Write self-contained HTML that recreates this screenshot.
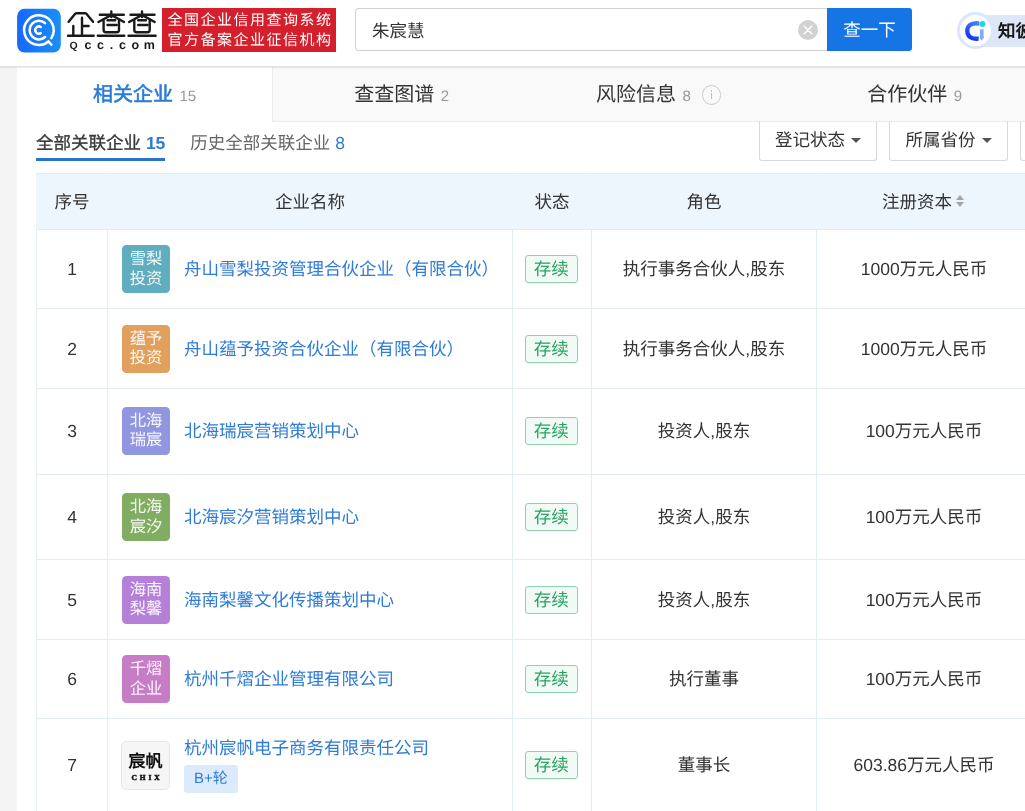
<!DOCTYPE html>
<html lang="zh-CN">
<head>
<meta charset="utf-8">
<title>朱宸慧 - 企查查</title>
<style>
*{box-sizing:border-box;margin:0;padding:0}
html,body{width:1025px;height:811px;overflow:hidden}
body{position:relative;background:#f4f4f4;text-rendering:geometricPrecision;font-family:"Liberation Sans",sans-serif;font-size:17.5px;color:#333;line-height:1}
a{color:#2f7cd6;text-decoration:none}

/* ---------- header ---------- */
.hd{will-change:transform;position:absolute;left:0;top:0;width:1025px;height:66px;background:#fff;box-shadow:0 1px 0 #e2e2e2,0 2px 1px rgba(0,0,0,.07);z-index:5}
.lg-ico{position:absolute;left:17px;top:8px;width:44px;height:45px}
.lg-word{position:absolute;left:62px;top:4px;width:100px;height:54px}
.slogan{position:absolute;left:162px;top:8px;width:174px;height:44px;background:#d4202c;color:#fff;font-size:15px;letter-spacing:1.5px;line-height:20.5px;padding:2.5px 0 0 5.5px;white-space:nowrap;overflow:hidden}
.sbox{position:absolute;left:355px;top:8px;width:473px;height:43px;border:1px solid #d2d2d2;border-right:0;border-radius:4px 0 0 4px;background:#fff}
.sbox .q{position:absolute;left:16px;top:0;line-height:44px;font-size:17.5px;color:#333}
.sbox .clr{position:absolute;left:442px;top:11px;width:20px;height:20px}
.sbtn{position:absolute;left:827px;top:8px;width:85px;height:43px;background:#1575e5;color:#fff;font-size:17.5px;line-height:45px;text-align:center;border-radius:0 3px 3px 0;overflow:hidden}
.ai{position:absolute;left:957px;top:12px;width:80px;height:38px}
.ai .bar{position:absolute;left:18px;top:2.5px;width:70px;height:32px;background:#dee7f8}
.ai .ring{position:absolute;left:0;top:0;width:37px;height:37px;border-radius:50%;background:#fff;border:3.5px solid #dce6f8}
.ai svg{position:absolute;left:6px;top:7px;width:26px;height:24px}
.ai .t{position:absolute;left:41px;top:0;line-height:39px;font-size:17.5px;font-weight:700;color:#1a1a1a;white-space:nowrap}

/* ---------- panel ---------- */
.panel{will-change:transform;position:absolute;left:17px;top:67px;width:1030px;height:760px;background:#fff}
.tabs{position:absolute;left:0;top:0;width:1030px;height:55px;display:flex}
.tab{width:256px;height:55px;flex:none;text-align:center;line-height:57px;overflow:hidden;font-size:20px;color:#333;background:#f9f9f9;border-bottom:1px solid #ebebeb;white-space:nowrap}
.tab small{font-size:15px;color:#999;margin-left:6.5px;font-weight:400;-webkit-text-stroke:0}
.tab.on{width:255px;background:#fff;border-bottom:0;color:#2b7bd9;-webkit-text-stroke:.6px #2b7bd9}
.tab.on+.tab{width:257px;border-left:1px solid #ebebeb}
.tab .inf{display:inline-block;width:19.5px;height:19.5px;border:1.3px solid #cbcbcb;border-radius:50%;vertical-align:-3.5px;margin-left:11px;position:relative}
.tab .inf:before{content:"";position:absolute;left:7.7px;top:3.6px;width:1.6px;height:2px;background:#c0c0c0}
.tab .inf:after{content:"";position:absolute;left:7.7px;top:7px;width:1.6px;height:6.3px;background:#c0c0c0}

.sub{position:absolute;left:19px;top:54px;height:40px;white-space:nowrap}
.sub span{display:inline-block;height:40px;line-height:45px;font-size:17.5px;color:#666;vertical-align:top}
.sub .cur{color:#3a3a3a;-webkit-text-stroke:.35px #3a3a3a;border-bottom:3px solid #2872d0;margin-right:25px}
.sub b{color:#2b7bd9;font-weight:700;-webkit-text-stroke:0}
.sub i{font-style:normal;color:#2b7bd9}

.dd{position:absolute;top:54px;height:39.5px;border:1px solid #d9d9d9;border-top-color:#ebebeb;border-radius:0 0 3px 3px;background:#fff;font-size:17.5px;line-height:37px;color:#333;text-align:center;white-space:nowrap}
.dd:after{content:"";display:inline-block;border:5px solid transparent;border-top:5.5px solid #555;border-bottom:0;vertical-align:3px;margin-left:6px}

/* ---------- table ---------- */
table{position:absolute;left:19px;top:106px;width:995px;border-collapse:collapse;table-layout:fixed}
table,thead,tbody,tr,th,td{font-family:"Liberation Sans",sans-serif;font-size:17.5px;line-height:20px;font-weight:400;font-style:normal;color:#333}
th,td{border:1px solid #e3ecf5;text-align:center;vertical-align:middle;white-space:nowrap;overflow:hidden;padding:0}
th{height:56px;background:#eef6fd;color:#333;border-left-color:#eef6fd;border-right-color:#eef6fd}
td.name{text-align:left;padding-left:14px}
.r3 td{padding-bottom:2px}
.bd{display:inline-block;vertical-align:middle;width:48px;height:48px;border-radius:4.5px;color:rgba(255,255,255,.93);font-size:16.3px;line-height:19.7px;padding-top:5.2px;text-align:center;margin-right:14px;overflow:hidden}
.nm{display:inline-block;vertical-align:middle;line-height:22px}
.tag{display:inline-block;width:53px;height:28px;line-height:26px;border:1px solid #8fd3ac;background:#f1faf5;color:#2aa463;font-size:17.5px;border-radius:3px;margin-right:1.5px}
.rnd{display:inline-block;margin-top:6.5px;margin-left:-0.5px;height:28px;line-height:28px;padding:0 10.5px;background:#dcebfb;color:#2b7bd9;font-size:15px;border-radius:3px}
.sort{display:inline-block;width:8px;height:13px;position:relative;vertical-align:0;margin-left:4px}
th:last-child{padding-right:2px}
.sort:before{content:"";position:absolute;left:0;top:0;border:4px solid transparent;border-bottom:5px solid #a5a5a5;border-top:0}
.sort:after{content:"";position:absolute;left:0;top:7.5px;border:4px solid transparent;border-top:5px solid #a5a5a5;border-bottom:0}
.cx{display:inline-block;vertical-align:middle;width:49px;height:49px;margin-left:-1px;margin-right:14px;border:1px solid #e6e6e6;border-radius:5px;background:#f6f6f6;text-align:center;overflow:hidden;color:#111}
.cx b{display:block;font-family:"Liberation Serif",serif;font-size:17px;line-height:18px;margin-top:11px;font-weight:700;letter-spacing:0}
.cx em{display:block;font-family:"Liberation Serif",serif;font-style:normal;font-weight:700;font-size:7.5px;-webkit-text-stroke:.5px #111;letter-spacing:2.8px;line-height:9px;margin-top:2px;padding-left:3px}
</style>
</head>
<body>

<div class="hd">
  <svg class="lg-ico" viewBox="0 0 44 45">
    <defs><linearGradient id="g1" x1="0" y1="0" x2="1" y2="0"><stop offset="0" stop-color="#1768ff"/><stop offset="1" stop-color="#1b8ef6"/></linearGradient></defs>
    <rect x="0.1" y="0.7" width="43.7" height="43.7" rx="7.5" fill="url(#g1)"/>
    <g fill="none" stroke="#fff" stroke-width="2.5" stroke-linecap="round">
      <path d="M34.31 30.16 A14.8 14.8 0 1 0 31.41 33.44 L34.3 36.7"/>
      <path d="M28 15.08 A9.3 9.3 0 1 0 28.12 29.01"/>
      <path d="M23.81 19.05 A3.6 3.6 0 1 0 23.81 25.15"/>
    </g>
  </svg>

  <svg class="lg-word" viewBox="0 0 100 54">
    <g fill="none" stroke="#1a1a1a" stroke-width="2.4" stroke-linecap="round" stroke-linejoin="round">
      <!-- 企 -->
      <path d="M6.6 17.8 L13.4 9.6 Q13.9 9.2 14.6 9.2 L23 9.2 Q23.7 9.2 24.2 9.6 L31 17.8"/>
      <path d="M20 13.8 V31.7 M20 22 H26.6 M11.3 22 V31.7 M6 31.8 H31.7"/>
      <!-- 查 -->
      <path d="M37.8 10.7 H61.8 M49.3 7.4 V13 M48.6 11.4 L36.4 18 M50 11.4 L62 18"/>
      <path d="M41.6 16.4 V26 Q41.6 28.2 43.8 28.2 H54.8 Q57 28.2 57 26 V16.4 M45.5 16.2 H53.2 M45.5 21 H54.6 M35.8 31.8 H62.3"/>
      <!-- 查 -->
      <path d="M68.5 10.7 H92.5 M80 7.4 V13 M79.3 11.4 L67.1 18 M80.7 11.4 L92.7 18"/>
      <path d="M72.3 16.4 V26 Q72.3 28.2 74.5 28.2 H85.5 Q87.7 28.2 87.7 26 V16.4 M76.2 16.2 H83.9 M76.2 21 H85.3 M66.5 31.8 H93.6"/>
    </g>
    <text font-family="Liberation Sans, sans-serif" font-weight="700" font-size="12.5" fill="#1a1a1a" text-anchor="middle" y="45">
      <tspan x="11.7" font-size="10.5">Q</tspan><tspan x="26">c</tspan><tspan x="38.5">c</tspan><tspan x="49.5">.</tspan><tspan x="60.5">c</tspan><tspan x="73.4">o</tspan><tspan x="87.3">m</tspan>
    </text>
  </svg>

  <div class="slogan">全国企业信用查询系统<br>官方备案企业征信机构</div>

  <div class="sbox">
    <span class="q">朱宸慧</span>
    <svg class="clr" viewBox="0 0 20 20"><circle cx="10" cy="10" r="10" fill="#d2d2d2"/><path d="M6.3 6.3 L13.7 13.7 M13.7 6.3 L6.3 13.7" stroke="#fff" stroke-width="1.5" stroke-linecap="round"/></svg>
  </div>
  <div class="sbtn">查一下</div>

  <div class="ai">
    <div class="bar"></div>
    <div class="ring"></div>
    <svg viewBox="0 0 26 24">
      <defs><linearGradient id="g2" x1="0.85" y1="0" x2="0.25" y2="1"><stop offset="0" stop-color="#4489f6"/><stop offset="1" stop-color="#1736f2"/></linearGradient>
      <clipPath id="c2"><path d="M0 0 H16.6 L15.5 24 H0 Z"/></clipPath></defs>
      <path d="M19 5.2 C14 3.4 4.3 3.6 4.3 12 C4.3 20.4 14 20.6 19 18.8" fill="none" stroke="url(#g2)" stroke-width="4.3" clip-path="url(#c2)"/>
      <circle cx="19.5" cy="5" r="2.9" fill="#22d4e8"/>
      <path d="M17 10.2 H20.6 V17.4 L21.1 18.6 L18.7 21.8 L17 19.6 Z" fill="#82aaf6"/>
    </svg>
    <span class="t">知彼阿尔法</span>
  </div>
</div>

<div class="panel">
  <div class="tabs">
    <div class="tab on">相关企业<small>15</small></div>
    <div class="tab" style="padding-left:1.5px">查查图谱<small>2</small></div>
    <div class="tab" style="padding-left:3.5px">风险信息<small>8</small><span class="inf"></span></div>
    <div class="tab" style="padding-left:3.5px">合作伙伴<small>9</small></div>
    <div class="tab"></div>
  </div>

  <div class="sub"><span class="cur">全部关联企业 <b>15</b></span><span>历史全部关联企业 <i>8</i></span></div>

  <div class="dd" style="left:742px;width:118px">登记状态</div>
  <div class="dd" style="left:872px;width:119px">所属省份</div>
  <div class="dd" style="left:1003px;width:110px;text-align:left;padding-left:14px">企业类型</div>

  <table>
    <colgroup><col style="width:71px"><col style="width:405px"><col style="width:79px"><col style="width:225px"><col style="width:215px"></colgroup>
    <thead>
      <tr><th>序号</th><th>企业名称</th><th>状态</th><th>角色</th><th>注册资本<span class="sort"></span></th></tr>
    </thead>
    <tbody>
      <tr style="height:79px"><td>1</td><td class="name"><span class="bd" style="background:#5fadbf">雪梨<br>投资</span><a class="nm">舟山雪梨投资管理合伙企业（有限合伙）</a></td><td><span class="tag">存续</span></td><td>执行事务合伙人,股东</td><td>1000万元人民币</td></tr>
      <tr style="height:80px"><td>2</td><td class="name"><span class="bd" style="background:#e2a05e">蕴予<br>投资</span><a class="nm">舟山蕴予投资合伙企业（有限合伙）</a></td><td><span class="tag">存续</span></td><td>执行事务合伙人,股东</td><td>1000万元人民币</td></tr>
      <tr class="r3" style="height:86px"><td>3</td><td class="name"><span class="bd" style="background:#9096df">北海<br>瑞宸</span><a class="nm">北海瑞宸营销策划中心</a></td><td><span class="tag">存续</span></td><td>投资人,股东</td><td>100万元人民币</td></tr>
      <tr style="height:85px"><td>4</td><td class="name"><span class="bd" style="background:#80ad61">北海<br>宸汐</span><a class="nm">北海宸汐营销策划中心</a></td><td><span class="tag">存续</span></td><td>投资人,股东</td><td>100万元人民币</td></tr>
      <tr style="height:80px"><td>5</td><td class="name"><span class="bd" style="background:#b480d8">海南<br>梨馨</span><a class="nm">海南梨馨文化传播策划中心</a></td><td><span class="tag">存续</span></td><td>投资人,股东</td><td>100万元人民币</td></tr>
      <tr style="height:79px"><td>6</td><td class="name"><span class="bd" style="background:#c77dc5">千熠<br>企业</span><a class="nm">杭州千熠企业管理有限公司</a></td><td><span class="tag">存续</span></td><td>执行董事</td><td>100万元人民币</td></tr>
      <tr style="height:93px"><td>7</td><td class="name"><span class="cx"><b>宸帆</b><em>CHIX</em></span><span class="nm"><a>杭州宸帆电子商务有限责任公司</a><br><span class="rnd">B+轮</span></span></td><td><span class="tag">存续</span></td><td>董事长</td><td>603.86万元人民币</td></tr>
    </tbody>
  </table>
</div>

</body>
</html>
